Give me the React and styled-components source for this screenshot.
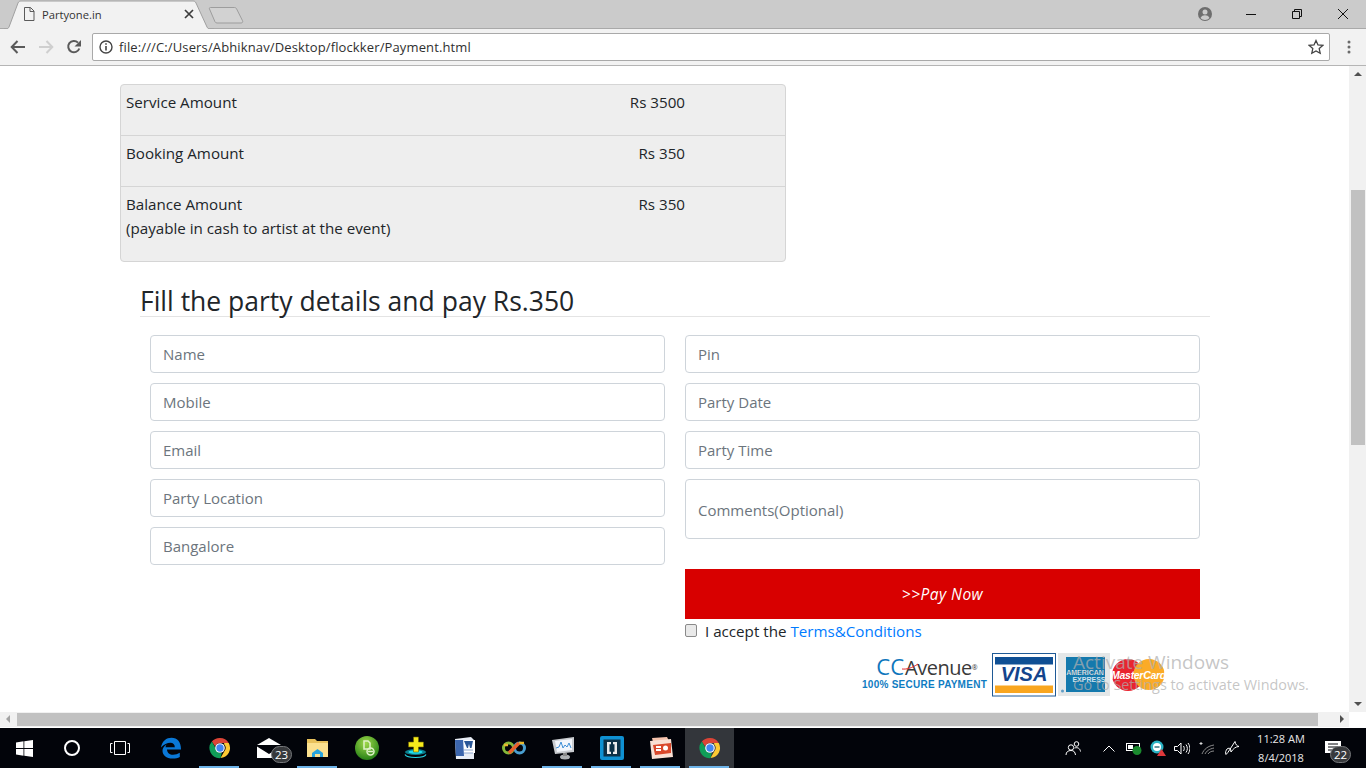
import React from "react";
import styled, { createGlobalStyle } from "styled-components";

const Global = createGlobalStyle`
  html, body { margin: 0; padding: 0; height: 100%; overflow: hidden; background: #fff; }
  * { box-sizing: border-box; }
  body { font-family: "Open Sans", "Noto Sans", "Liberation Sans", sans-serif; color: #212529; }
`;

const Shell = styled.div`
  position: relative; width: 1366px; height: 768px; display: flex; flex-direction: column; overflow: hidden;
`;

/* ---------- browser chrome ---------- */
const TabStrip = styled.div`
  height: 29px; background: #cbcbcb; display: flex; align-items: flex-start; border-bottom: 1px solid #a9a9a9; position: relative;
`;
const TabShape = styled.svg`
  position: absolute; left: 4px; top: 0; width: 210px; height: 29px;
`;
const TabContent = styled.div`
  position: relative; margin-left: 23px; width: 171px; height: 28px; display: flex; align-items: center; font-size: 11.2px; color: #333;
`;
const TabTitle = styled.span`
  flex: 1; margin-left: 7px; padding-top: 1px;
`;
const NewTab = styled.svg`
  position: absolute; left: 207px; top: 6px; width: 38px; height: 19px;
`;
const WindowControls = styled.div`
  margin-left: auto; display: flex; align-items: center; height: 28px;
`;
const Profile = styled.div`
  width: 46px; display: flex; justify-content: center;
`;
const WinBtn = styled.div`
  width: 46px; height: 28px; display: flex; align-items: center; justify-content: center;
`;
const Toolbar = styled.div`
  height: 37px; background: #f2f2f2; border-bottom: 1px solid #b5b5b5; display: flex; align-items: center; padding: 0 0 1px 0;
`;
const NavBtn = styled.div`
  width: 28px; height: 28px; display: flex; align-items: center; justify-content: center;
  &:first-child { margin-left: 4px; }
`;
const Omnibox = styled.div`
  margin-left: 4px; width: 1238px; height: 28px; background: #fff; border: 1px solid #a9a9a9; border-radius: 2px;
  display: flex; align-items: center; padding: 0 5px 0 6px; font-size: 13px; color: #303030;
`;
const Url = styled.span`
  margin-left: 6px; flex: 1; letter-spacing: 0.01em;
`;
const MenuBtn = styled.div`
  flex: 1; display: flex; justify-content: center; padding-left: 2px;
`;

/* ---------- page ---------- */
const Viewport = styled.div`
  flex: 1; display: flex; min-height: 0;
`;
const Page = styled.main`
  flex: 1; padding: 18px 0 0 120px; background: #fff; overflow: hidden;
`;
const Card = styled.section`
  width: 666px; height: 178px; background: #eee; border: 1px solid #d5d5d5; border-radius: 4px; font-size: 15.17px; line-height: 24px;
`;
const Row = styled.div`
  display: flex; justify-content: space-between; padding: 5px 100px 0 5px; height: ${p => p.$h}px;
  border-bottom: ${p => (p.$last ? "0" : "1px solid #d5d5d5")};
`;
const Amount = styled.span`
  text-align: right;
`;
const Details = styled.section`
  margin: 21px 0 0 20px; width: 1070px;
`;
const Heading = styled.h2`
  margin: 0; font-size: 26.5px; font-weight: 400; line-height: 36px; height: 34px; border-bottom: 1px solid #e4e4e4; color: #212529;
`;
const FormGrid = styled.form`
  display: grid; grid-template-columns: 515px 515px; column-gap: 20px; padding: 18px 10px 0;
`;
const Column = styled.div`
  display: flex; flex-direction: column; gap: 10px;
`;
const Field = styled.input`
  display: block; width: 100%; height: 38px; padding: 0 12px; background: #fff; border: 1px solid #ced4da; border-radius: 4px;
  font: 400 15px "Open Sans", sans-serif; color: #495057; outline: none;
  &::placeholder { color: #6c757d; opacity: 1; }
`;
const Comments = styled.textarea`
  display: block; width: 100%; height: 60px; padding: 20px 12px 0; background: #fff; border: 1px solid #ced4da; border-radius: 4px;
  font: 400 15px/20px "Open Sans", sans-serif; color: #495057; outline: none; resize: none;
  &::placeholder { color: #6c757d; opacity: 1; }
`;
const PayButton = styled.button`
  display: block; width: 100%; height: 50px; margin-top: 20px; border: 0; background: #d80000; color: #fff;
  font: italic 400 15.5px "Open Sans", sans-serif; letter-spacing: 0.03em;
`;
const Accept = styled.label`
  display: flex; align-items: center; height: 23px; font-size: 15.17px;
`;
const Check = styled.span`
  width: 12px; height: 13px; border: 1px solid #8a8a8a; border-radius: 2px; background: #e9e9e9; margin: 0 8px 0 0;
`;
const TermsLink = styled.a`
  color: #007bff; margin-left: 4px; text-decoration: none;
`;
const PayLogos = styled.div`
  display: flex; align-items: flex-start; height: 46px; margin-top: 11px; margin-left: 177px; gap: 2px;
`;
const CcWrap = styled.div`
  position: relative; width: 128px; height: 44px; display: flex; flex-direction: column; align-items: flex-end; padding: 3px 3px 0 0;
`;
const CcTop = styled.div`
  display: flex; align-items: baseline; line-height: 20px; font-size: 20px; color: #3a3a3a; letter-spacing: -0.025em; margin-right: 10px;
`;
const CcBlue = styled.span`
  color: #0f76bc; font-size: 22px; letter-spacing: 0; margin-right: 1px;
`;
const Reg = styled.span`
  font-size: 7px; align-self: flex-start; margin-top: 2px;
`;
const CcSub = styled.div`
  margin-top: 1px; font: 700 10px/11px "Liberation Sans", sans-serif; color: #0f7cc2; letter-spacing: 0.26px; white-space: nowrap;
`;
const Swoosh = styled.svg`
  position: absolute; left: 40px; top: 10px; width: 16px; height: 8px;
`;
const MasterWrap = styled.div`
  margin-top: 6px; display: flex;
`;

const ActivateWrap = styled.div`
  position: absolute; left: 1073px; top: 649px; width: 260px; color: rgba(175,175,175,0.72); pointer-events: none;
`;
const ActivateTitle = styled.div`
  font-size: 19px; line-height: 26px;
`;
const ActivateSub = styled.div`
  font-size: 14.4px; line-height: 20px; white-space: nowrap;
`;

/* ---------- scrollbars ---------- */
const VBar = styled.div`
  width: 17px; background: #f1f1f1; display: flex; flex-direction: column; align-items: center; position: relative; padding-top: 124px;
`;
const VThumb = styled.div`
  width: 14px; height: 255px; background: #c1c1c1; margin-left: 1px;
`;
const ArrowUp = styled.div`
  position: absolute; top: 6px; left: 5px; width: 0; height: 0; border: 4px solid transparent; border-top: 0; border-bottom: 4px solid #505050;
`;
const ArrowDown = styled.div`
  position: absolute; bottom: 6px; left: 5px; width: 0; height: 0; border: 4px solid transparent; border-bottom: 0; border-top: 4px solid #505050;
`;
const HBar = styled.div`
  height: 16px; background: #fff; display: flex; align-items: stretch; position: relative;
`;
const HTrack = styled.div`
  width: 1349px; height: 15px; background: #f1f1f1; padding: 1px 31px 0 17px; position: relative;
`;
const HThumb = styled.div`
  height: 13px; background: #c1c1c1;
`;
const ArrowLeft = styled.div`
  position: absolute; left: 6px; top: 3px; width: 0; height: 0; border: 4px solid transparent; border-left: 0; border-right: 4px solid #a3a3a3;
`;
const ArrowRight = styled.div`
  position: absolute; right: 5px; top: 3px; width: 0; height: 0; border: 4px solid transparent; border-right: 0; border-left: 4px solid #505050;
`;

/* ---------- taskbar ---------- */
const Taskbar = styled.footer`
  height: 40px; background: #02040a; display: flex; align-items: stretch; color: #fff;
`;
const SysBtn = styled.div`
  width: 48px; display: flex; align-items: center; justify-content: center;
`;
const Pinned = styled.div`
  display: flex; margin-left: 2px;
`;
const PinCell = styled.div`
  position: relative; width: 49px; display: flex; align-items: center; justify-content: center;
  background: ${p => (p.$active ? "#33363b" : "transparent")};
  &::after {
    content: ""; position: absolute; left: 4px; right: 5px; bottom: 0; height: 2px;
    background: ${p => (p.$open ? "#6db3e8" : "transparent")};
  }
`;
const Badge = styled.span`
  position: absolute; width: 21px; height: 17px; border-radius: 9px; background: #37393c; border: 1px solid #77797c; color: #fff;
  font: 400 11.5px/15px "Open Sans", sans-serif; text-align: center; right: ${p => p.$r}px; bottom: ${p => p.$b}px;
`;
const Tray = styled.div`
  margin-left: auto; display: flex; align-items: center; position: relative;
`;
const TrayIcon = styled.div`
  width: ${p => p.$w || 24}px; display: flex; align-items: center; justify-content: center;
`;
const Clock = styled.div`
  width: 74px; text-align: center; font-size: 11px; line-height: 19px; color: #e8e8e8;
`;
const Notify = styled.div`
  position: relative; width: 46px; margin-left: 2px; height: 40px; display: flex; align-items: center; justify-content: center; padding-right: 20px;
`;

/* ---------- drawings ---------- */
const ChromeLogo = ({ size = 22 }) => (
  <svg width={size} height={size} viewBox="0 0 48 48">
    <path d="M24 2a22 22 0 0 1 19.05 11H24a11 11 0 0 0-10.5 7.7L6.2 10A22 22 0 0 1 24 2z" fill="#db4437" />
    <path d="M43.05 13A22 22 0 0 1 25 46l9.5-16.5A11 11 0 0 0 33 15.9V13z" fill="#fcc934" />
    <path d="M6.2 10l9.4 16.4A11 11 0 0 0 28 34.6L25 46A22 22 0 0 1 6.2 10z" fill="#0f9d58" />
    <circle cx="24" cy="24" r="10.5" fill="#fff" />
    <circle cx="24" cy="24" r="8" fill="#4285f4" />
  </svg>
);

const WindowsLogo = () => (
  <svg width="17" height="17" viewBox="0 0 17 17" fill="#fff">
    <path d="M0 2.4 7.5 1.3V8H0zM8.3 1.2 17 0v8H8.3zM0 9h7.5v6.7L0 14.6zM8.3 9H17v8l-8.7-1.2z" />
  </svg>
);

const Edge = () => (
  <svg width="22" height="22" viewBox="0 0 22 22">
    <path d="M1 10.5C2 4 6.500 .8 11.500 .8 17.500 .8 21 5 21 12.500H7c.2 3.500 2.800 5.300 6 5.300 2.500 0 4.800-.7 6.800-2v4.300c-2 1-4.300 1.500-7 1.500C6 21.600 2.500 18 2.500 13.800c0-2.300 1.200-4.500 4-6.300-.5 1-.9 1.800-1 2.800h9.300c0-2.800-1.700-4.500-4.400-4.500C7.500 5.800 3.500 7.500 1 10.500z" fill="#0a78d7" />
  </svg>
);

const Mail = () => (
  <svg width="24" height="20" viewBox="0 0 24 20">
    <path d="M0 7 12 0l12 7z" fill="#fff" />
    <path d="M0 8.500 12 16 24 8.500V20H0z" fill="#fff" />
    <path d="M2 7h20l-10 7z" fill="#02040a" />
  </svg>
);

const Folder = () => (
  <svg width="23" height="20" viewBox="0 0 23 20">
    <path d="M1 1h8l2 2h11v16H1z" fill="#e8c15c" />
    <path d="M1 5h21v14H1z" fill="#fbe08f" />
    <path d="M6 19v-4l5.500-4 5.500 4v4h-3v-3H9v3z" fill="#2aa5dd" />
  </svg>
);

const GreenBall = () => (
  <svg width="24" height="24" viewBox="0 0 24 24">
    <defs>
      <radialGradient id="gb" cx="45%" cy="30%" r="75%">
        <stop offset="0" stopColor="#9fd84a" />
        <stop offset="1" stopColor="#1d7a12" />
      </radialGradient>
    </defs>
    <circle cx="12" cy="12" r="12" fill="url(#gb)" />
    <path d="M9 5h4l2 2v6H9z" fill="none" stroke="#dff2c8" strokeWidth="1.500" />
    <circle cx="15.500" cy="15.500" r="3.500" fill="none" stroke="#dff2c8" strokeWidth="1.500" />
    <path d="M13 15.500h5" stroke="#dff2c8" strokeWidth="1.500" />
  </svg>
);

const YellowPlus = () => (
  <svg width="24" height="24" viewBox="0 0 24 24">
    <ellipse cx="11.500" cy="16" rx="10.500" ry="3" fill="#0b7f8e" />
    <ellipse cx="11.500" cy="16" rx="7" ry="1.700" fill="#1fe0f0" />
    <path d="M1 18.500c1 2 4 3 10.500 3s9.500-1 10.500-3" fill="none" stroke="#27d6e6" strokeWidth="1.200" />
    <path d="M9.500 1h5v5h5v5h-5v5h-5v-5h-5V6h5z" fill="#f6ea1c" stroke="#6b6200" strokeWidth=".6" />
  </svg>
);

const WordIcon = () => (
  <svg width="24" height="23" viewBox="0 0 24 23">
    <path d="M2 2 18 0l3 3v19H3z" fill="#e8edf6" />
    <path d="M2 3h8l1 16H3z" fill="#3c66ad" />
    <path d="M11 3h11v13H11z" fill="#fff" />
    <path d="M11 4h9l-1.500 7h-1.500l-1-4-1 4H14z" fill="#2b5797" />
    <path d="M11 13h9M11 16h9" stroke="#8ea7d0" />
  </svg>
);

const Infinity8 = () => (
  <svg width="24" height="14" viewBox="0 0 24 14">
    <circle cx="6.500" cy="7" r="5" fill="none" stroke="#86b93a" strokeWidth="3" />
    <circle cx="17.500" cy="7" r="5" fill="none" stroke="#4a9fd0" strokeWidth="3" />
    <path d="M2 4h4M17 2h5" stroke="#e8b92e" strokeWidth="2.500" />
    <path d="M7 12 17 2" stroke="#e8622c" strokeWidth="3.500" />
  </svg>
);

const Monitor = () => (
  <svg width="24" height="24" viewBox="0 0 24 24">
    <path d="M1 4 23 1v15L4 18z" fill="#c9ccd0" />
    <path d="M4 5l17-2v11L6 16z" fill="#f3f6fb" />
    <path d="M5 12l3-1 2-5 2 6 2-3 2 2 2-4 2 5" fill="none" stroke="#3f8fd6" />
    <ellipse cx="14" cy="21" rx="5" ry="2.500" fill="#aeb1b4" />
    <path d="M12 17h4v3h-4z" fill="#888" />
  </svg>
);

const Brackets = () => (
  <svg width="24" height="24" viewBox="0 0 24 24">
    <rect width="24" height="24" rx="2" fill="#0f91d2" />
    <rect x="3.500" y="3.500" width="17" height="17" fill="#0d3147" />
    <path d="M7 6h4v2.200H9.500v7.600H11V18H7zM17 6h-4v2.200h1.500v7.600H13V18h4z" fill="#ececec" />
  </svg>
);

const Ppt = () => (
  <svg width="24" height="23" viewBox="0 0 24 23">
    <path d="M3 1 18 0l2 4-16 1z" fill="#f6c3ad" />
    <path d="M1 4 22 2l2 18L3 22z" fill="#f9e0d4" />
    <path d="M4 8l18-2v10L6 18z" fill="#d9482b" />
    <circle cx="16.500" cy="11" r="2.500" fill="#fff" />
    <path d="M7 9h5v2H7zM7 12h5v2H7z" fill="#fff" />
  </svg>
);

const VisaCard = () => (
  <svg width="64" height="44" viewBox="0 0 64 44">
    <rect x=".5" y=".5" width="63" height="42.500" fill="#fff" stroke="#1f5a96" />
    <rect x="3" y="4" width="58" height="7.500" fill="#0f4f94" />
    <rect x="3" y="32.500" width="58" height="7.500" fill="#f9a61f" />
    <text x="32" y="28" textAnchor="middle" fontFamily="Liberation Sans" fontWeight="700" fontStyle="italic" fontSize="20" fill="#14448c">VISA</text>
  </svg>
);

const AmexCard = () => (
  <svg width="52" height="44" viewBox="0 0 52 44">
    <rect width="52" height="43" fill="#e4e7e8" />
    <rect x="8" y="4" width="39" height="35" fill="#1479ad" />
    <circle cx="4.500" cy="38" r="1.500" fill="#5e9bc4" />
    <text x="27" y="21.500" textAnchor="middle" fontFamily="Liberation Sans" fontWeight="700" fontSize="7" fill="#fff" stroke="#10557c" strokeWidth=".2">AMERICAN</text>
    <text x="31" y="29" textAnchor="middle" fontFamily="Liberation Sans" fontWeight="700" fontSize="7" fill="#cfe4f0">EXPRESS</text>
  </svg>
);

const MasterCard = () => (
  <svg width="54" height="33" viewBox="0 0 54 33">
    <circle cx="16" cy="16" r="16" fill="#e9242f" />
    <circle cx="37" cy="15.500" r="15.500" fill="#fbab27" />
    <text x="26.500" y="20" textAnchor="middle" fontFamily="Liberation Sans" fontWeight="700" fontStyle="italic" fontSize="10.500" letterSpacing="-.3" fill="#fff">MasterCard</text>
  </svg>
);

const left = ["Name", "Mobile", "Email", "Party Location", "Bangalore"];
const right = ["Pin", "Party Date", "Party Time"];
const pins = [
  { k: "edge", el: <Edge /> },
  { k: "chrome", el: <ChromeLogo />, open: true },
  { k: "mail", el: <Mail />, badge: "23" },
  { k: "folder", el: <Folder />, open: true },
  { k: "ball", el: <GreenBall /> },
  { k: "plus", el: <YellowPlus /> },
  { k: "word", el: <WordIcon /> },
  { k: "inf", el: <Infinity8 /> },
  { k: "mon", el: <Monitor />, open: true },
  { k: "br", el: <Brackets />, open: true },
  { k: "ppt", el: <Ppt />, open: true },
  { k: "chrome2", el: <ChromeLogo />, open: true, active: true },
];

export default function App() {
  return (
    <Shell>
      <Global />
      <TabStrip>
        <TabShape viewBox="0 0 210 29">
          <path d="M0 29h2c1.500 0 2.500-.8 3-2L14 3c.6-1.500 1.500-2 3-2h172c1.500 0 2.400.5 3 2l11 24c.5 1.200 1.500 2 3 2h4" fill="#f2f2f2" stroke="#a0a0a0" />
        </TabShape>
        <NewTab viewBox="0 0 38 19">
          <path d="M3.500 1.500h24c1 0 1.500.4 2 1.200l6 12c.6 1.300 0 2.300-1.500 2.300H10c-1 0-1.500-.4-2-1.200l-5.500-12.800c-.4-.9 0-1.500 1-1.500z" fill="#d2d2d2" stroke="#9d9d9d" />
        </NewTab>
        <TabContent>
          <svg width="12" height="14" viewBox="0 0 12 14" fill="none" stroke="#5a5a5a">
            <path d="M1.500.5h6l3.500 3.500v9.500H1.500z" />
            <path d="M7 .5V4.500h4" />
          </svg>
          <TabTitle>Partyone.in</TabTitle>
          <svg width="10" height="10" viewBox="0 0 10 10" stroke="#3c3c3c" strokeWidth="1.700">
            <path d="M1 1l8 8M9 1 1 9" />
          </svg>
        </TabContent>
        <WindowControls>
          <Profile>
            <svg width="14" height="14" viewBox="0 0 14 14">
              <circle cx="7" cy="7" r="7" fill="#6e6e6e" />
              <circle cx="7" cy="5" r="2.500" fill="#cbcbcb" />
              <path d="M2.500 11c1-2 2.500-2.700 4.500-2.700s3.500.7 4.500 2.700c-1 1.200-2.700 2-4.500 2s-3.500-.8-4.500-2z" fill="#cbcbcb" />
            </svg>
          </Profile>
          <WinBtn>
            <svg width="10" height="10" viewBox="0 0 10 10"><path d="M0 5.500h10" stroke="#111" /></svg>
          </WinBtn>
          <WinBtn>
            <svg width="10" height="10" viewBox="0 0 10 10" fill="none" stroke="#111">
              <path d="M.5 2.500h7v7h-7zM2.500 2.500v-2h7v7h-2" />
            </svg>
          </WinBtn>
          <WinBtn>
            <svg width="10" height="10" viewBox="0 0 10 10" stroke="#111"><path d="M0 0l10 10M10 0 0 10" /></svg>
          </WinBtn>
        </WindowControls>
      </TabStrip>

      <Toolbar>
        <NavBtn>
          <svg width="16" height="14" viewBox="0 0 16 14" fill="none" stroke="#5a5a5a" strokeWidth="2">
            <path d="M15 7H2M7.500 1 1.700 7l5.800 6" />
          </svg>
        </NavBtn>
        <NavBtn>
          <svg width="16" height="14" viewBox="0 0 16 14" fill="none" stroke="#cfcfcf" strokeWidth="2">
            <path d="M1 7h13M8.500 1l5.800 6-5.800 6" />
          </svg>
        </NavBtn>
        <NavBtn>
          <svg width="16" height="16" viewBox="0 0 16 16" fill="none">
            <path d="M13.300 9.500A5.700 5.700 0 1 1 12 3.600" stroke="#5a5a5a" strokeWidth="2" />
            <path d="M15 1v6.500H8.500z" fill="#5a5a5a" />
          </svg>
        </NavBtn>
        <Omnibox>
          <svg width="14" height="14" viewBox="0 0 14 14" fill="none">
            <circle cx="7" cy="7" r="6" stroke="#444" strokeWidth="1.400" />
            <path d="M7 6v4.500M7 3.300v1.500" stroke="#444" strokeWidth="1.600" />
          </svg>
          <Url>file:///C:/Users/Abhiknav/Desktop/flockker/Payment.html</Url>
          <svg width="16" height="16" viewBox="0 0 16 16" fill="none" stroke="#444" strokeWidth="1.300">
            <path d="M8 1.500l2 4.400 4.800.5-3.600 3.200 1 4.700L8 11.900l-4.200 2.400 1-4.700L1.200 6.400 6 5.900z" />
          </svg>
        </Omnibox>
        <MenuBtn>
          <svg width="4" height="14" viewBox="0 0 4 14" fill="#6a6a6a">
            <circle cx="2" cy="2" r="1.500" /><circle cx="2" cy="7" r="1.500" /><circle cx="2" cy="12" r="1.500" />
          </svg>
        </MenuBtn>
      </Toolbar>

      <Viewport>
        <Page>
          <Card>
            <Row $h={51}><span>Service Amount</span><Amount>Rs 3500</Amount></Row>
            <Row $h={51}><span>Booking Amount</span><Amount>Rs 350</Amount></Row>
            <Row $h={74} $last>
              <span>Balance Amount<br />(payable in cash to artist at the event)</span>
              <Amount>Rs 350</Amount>
            </Row>
          </Card>
          <Details>
            <Heading>Fill the party details and pay Rs.350</Heading>
            <FormGrid>
              <Column>
                {left.map(p => <Field key={p} placeholder={p} />)}
              </Column>
              <Column>
                {right.map(p => <Field key={p} placeholder={p} />)}
                <Comments placeholder="Comments(Optional)" />
                <div>
                  <PayButton type="button">&gt;&gt;Pay Now</PayButton>
                  <Accept>
                    <Check />
                    I accept the <TermsLink>Terms&amp;Conditions</TermsLink>
                  </Accept>
                  <PayLogos>
                    <CcWrap>
                      <CcTop><CcBlue>CC</CcBlue>Avenue<Reg>®</Reg></CcTop>
                      <Swoosh viewBox="0 0 16 8">
                        <path d="M0 6c5 .5 10-1 16-5" fill="none" stroke="#e2262b" strokeWidth="1" />
                      </Swoosh>
                      <CcSub>100% SECURE PAYMENT</CcSub>
                    </CcWrap>
                    <VisaCard />
                    <AmexCard />
                    <MasterWrap><MasterCard /></MasterWrap>
                  </PayLogos>
                </div>
              </Column>
            </FormGrid>
          </Details>
        </Page>
        <VBar>
          <ArrowUp />
          <VThumb />
          <ArrowDown />
        </VBar>
      </Viewport>

      <HBar>
        <HTrack>
          <ArrowLeft />
          <HThumb />
          <ArrowRight />
        </HTrack>
      </HBar>

      <Taskbar>
        <SysBtn><WindowsLogo /></SysBtn>
        <SysBtn>
          <svg width="16" height="16" viewBox="0 0 16 16" fill="none" stroke="#fff" strokeWidth="2"><circle cx="8" cy="8" r="7" /></svg>
        </SysBtn>
        <SysBtn>
          <svg width="20" height="14" viewBox="0 0 20 14" fill="none" stroke="#fff">
            <path d="M4.500.5h11v13h-11zM2.500 2.500H.5v9h2M17.500 2.500h2v9h-2" />
          </svg>
        </SysBtn>
        <Pinned>
          {pins.map(p => (
            <PinCell key={p.k} $open={p.open} $active={p.active}>
              {p.el}
              {p.badge && <Badge $r={1} $b={5}>{p.badge}</Badge>}
            </PinCell>
          ))}
        </Pinned>
        <Tray>
          <TrayIcon $w={46}>
            <svg width="16" height="15" viewBox="0 0 16 15" fill="none" stroke="#fff">
              <circle cx="6" cy="6.500" r="2.700" /><circle cx="11.500" cy="3" r="2.300" />
              <path d="M1 14c0-3 2-4.500 5-4.500s4 1.500 4.500 4.500M9.500 7c3.500-1 5.500.5 6 3.500" />
            </svg>
          </TrayIcon>
          <TrayIcon $w={26}>
            <svg width="12" height="7" viewBox="0 0 12 7" fill="none" stroke="#fff"><path d="M.5 6.500 6 1l5.500 5.500" /></svg>
          </TrayIcon>
          <TrayIcon $w={24}>
            <svg width="16" height="14" viewBox="0 0 16 14">
              <rect x=".5" y="2.500" width="13" height="7" fill="none" stroke="#fff" />
              <rect x="2" y="4" width="5" height="4" fill="#fff" />
              <circle cx="11" cy="9.500" r="4.500" fill="#1a8a2e" />
            </svg>
          </TrayIcon>
          <TrayIcon $w={24}>
            <svg width="16" height="16" viewBox="0 0 16 16">
              <circle cx="7" cy="7" r="6.500" fill="#2ab3c4" />
              <circle cx="7" cy="7" r="4" fill="#fff" />
              <path d="M4.500 7h5" stroke="#16606c" strokeWidth="1.300" />
              <path d="M11.500 9 16 16H7z" fill="#e0383b" />
            </svg>
          </TrayIcon>
          <TrayIcon $w={24}>
            <svg width="16" height="13" viewBox="0 0 16 13" fill="none" stroke="#fff">
              <path d="M.5 4.500h3L7 1v11L3.500 8.500h-3z" />
              <path d="M9.500 4c1 1.500 1 3.500 0 5M12 2.500c1.800 2.500 1.800 5.500 0 8M14 1c2.500 3.500 2.500 7.500 0 11" />
            </svg>
          </TrayIcon>
          <TrayIcon $w={26}>
            <svg width="16" height="14" viewBox="0 0 16 14" fill="none" stroke="#8a8a8a">
              <path d="M3 13C5 8 9 5 15 4M6 13c1.500-3 4-5 9-6M9 13c1-1.500 3-3 6-3" />
              <path d="M2 1v3M.5 2.500h3" stroke="#ddd" />
            </svg>
          </TrayIcon>
          <TrayIcon $w={24}>
            <svg width="16" height="16" viewBox="0 0 16 16" fill="none" stroke="#fff">
              <path d="M11 1.500 5.500 10c-1 2-2.500 3.500-3.500 4.500-1-2 0-4 1-5.500 1-1 3-1 3.500 0L7 12c2-3 4.500-5.500 8-5.500-2-.5-3.500-2-4-5z" />
            </svg>
          </TrayIcon>
          <Clock>11:28 AM<br />8/4/2018</Clock>
          <Notify>
            <svg width="16" height="15" viewBox="0 0 16 15">
              <path d="M0 0h16v12H0z" fill="#fff" />
              <path d="M3 3h10M3 6h10M3 9h6" stroke="#02040a" />
            </svg>
            <Badge $r={15} $b={5}>22</Badge>
          </Notify>
        </Tray>
      </Taskbar>

      <ActivateWrap>
        <ActivateTitle>Activate Windows</ActivateTitle>
        <ActivateSub>Go to Settings to activate Windows.</ActivateSub>
      </ActivateWrap>
    </Shell>
  );
}
